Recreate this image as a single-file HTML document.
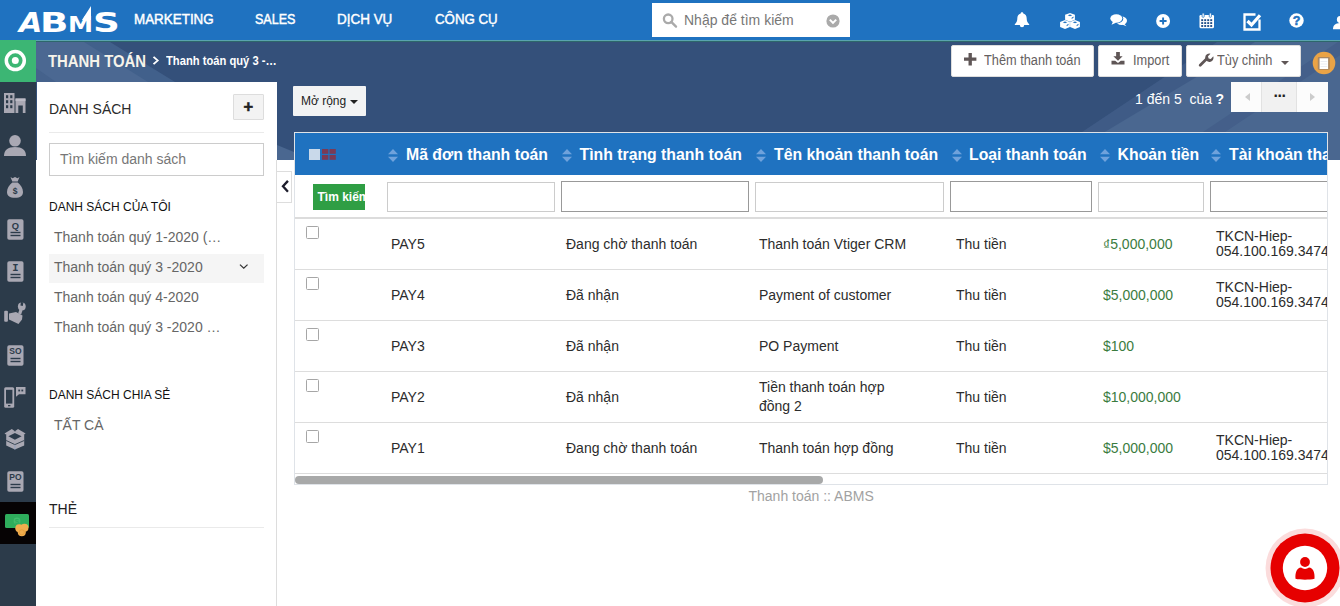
<!DOCTYPE html>
<html lang="vi">
<head>
<meta charset="utf-8">
<title>Thanh toán :: ABMS</title>
<style>
*{box-sizing:border-box;margin:0;padding:0}
html,body{width:1340px;height:606px;overflow:hidden;background:#fff}
body{font-family:"Liberation Sans",sans-serif;font-size:14px;color:#333;position:relative}
.a{position:absolute}
.t{position:absolute;white-space:nowrap;line-height:1}
svg{position:absolute;overflow:visible}
#topbar{position:absolute;left:0;top:0;width:1340px;height:40px;background:#1f72c0}
#tline1{position:absolute;left:0;top:40px;width:1340px;height:1px;background:#5aa4ae}
#tline2{position:absolute;left:0;top:41px;width:1340px;height:1px;background:#2d676b}
#subbar{position:absolute;left:0;top:42px;width:1340px;height:118px;background:#34507a;overflow:hidden}
#side{position:absolute;left:0;top:82px;width:36px;height:524px;background:#2c3b4a}
#greenbox{position:absolute;left:0;top:40px;width:36px;height:42px;background:#3cb674}
#panel{position:absolute;left:37px;top:82px;width:240px;height:524px;background:#fff}
#pborder{position:absolute;left:276px;top:160px;width:1px;height:446px;background:#ddd}
.menu{transform-origin:0 0;position:absolute;top:12px;color:#fff;font-size:14.5px;-webkit-text-stroke:0.45px #fff;white-space:nowrap;line-height:1}
.btn{position:absolute;background:#fff;border:1px solid #ddd;border-radius:2px;top:45px;height:32px}
.btn .t{color:#646060;font-size:14px;top:7px;transform-origin:0 0;transform:scaleX(.912)}
.li{position:absolute;left:54px;color:#666;font-size:14px;white-space:nowrap;line-height:1}
.h12{position:absolute;left:49px;color:#111;font-size:12px;white-space:nowrap;line-height:1}
.logo{position:absolute;left:0;top:0;width:125px;height:40px;font-family:"DejaVu Sans","Liberation Sans",sans-serif;font-weight:bold;font-size:27.400px;color:#fff;line-height:1}
.logo span{position:absolute;top:9px;transform-origin:0 0;display:block}
/* table */
#tbl{position:absolute;left:294px;top:132px;width:1034px;height:353px;background:#fff;border:1px solid #dfe3e8;overflow:hidden}
#thead{position:absolute;left:0;top:0;width:1032px;height:42px;background:#1f72c0}
.th{position:absolute;top:14px;color:#fff;font-weight:bold;font-size:15.800px;white-space:nowrap;line-height:1;font-family:"Liberation Sans",sans-serif}
.inp{position:absolute;top:49px;height:30px;background:#fff;border:1px solid #ccc}
.inp.d{top:48px;height:31px;border-color:#999}
.rl{position:absolute;left:0;width:1032px;height:1px;background:#ddd}
.c{position:absolute;white-space:nowrap;line-height:1;color:#2c2c2c;font-size:14px}
.g{color:#3b7c3f}
.cb{position:absolute;left:11px;width:13px;height:13px;border:1px solid #a6a6a6;border-radius:1.500px;background:#fff}
</style>
</head>
<body>
<div id="subbar">
<svg width="1340" height="118" viewBox="0 42 1340 118" style="left:0;top:0">
<polygon points="36,42 110,42 175,82 36,82" fill="#41608b"/>
<polygon points="36,42 84,42 148,82 36,82" fill="#4b6892"/>
<polygon points="36,68 56,82 36,82" fill="#45628c"/>
<polygon points="1217,42 1340,42 1340,160 1040,160" fill="#3f5b86"/>
<polygon points="1255,42 1340,42 1340,160 1058,160" fill="#4a6790"/>
<polygon points="1338,42 1360,42 1183,160 1161,160" fill="#445f8a"/>
<polygon points="277,145 294,152 294,160 277,160" fill="#4a6790"/>
</svg>
</div>
<div id="topbar"></div>
<div id="tline1"></div><div id="tline2"></div>
<div id="greenbox"></div>
<div id="side"></div>
<div id="panel"></div>
<div id="pborder"></div>
<!--TOPBAR-->
<div class="logo"><span style="left:18.500px;font-style:oblique;transform:scaleX(1.1)">A</span><span style="left:40px;transform:scaleX(1.36)">B</span><span style="left:68px;font-size:21px;top:15.300px;transform:scaleX(1.2)">M</span><span style="left:93px;transform:scaleX(1.36)">S</span></div>
<svg width="10" height="16" viewBox="0 0 10 16" style="left:82px;top:6px"><polygon points="0,14 9,0 9,14" fill="#fff"/></svg>
<div class="menu" style="left:133.5px;transform:scaleX(.925)">MARKETING</div>
<div class="menu" style="left:254.5px;transform:scaleX(.865)">SALES</div>
<div class="menu" style="left:336.5px;transform:scaleX(.928)">DỊCH VỤ</div>
<div class="menu" style="left:435px;transform:scaleX(.915)">CÔNG CỤ</div>
<div class="a" style="left:652px;top:3px;width:198px;height:34px;background:#fff"></div>
<svg width="16" height="16" viewBox="0 0 16 16" style="left:662px;top:12px"><circle cx="6.2" cy="6.8" r="4.3" fill="none" stroke="#aaa" stroke-width="2.3"/><path d="M9.5 10.2 L14 14.6" stroke="#aaa" stroke-width="2.4" stroke-linecap="round"/></svg>
<div class="t" style="left:684px;top:13px;font-size:14px;color:#777">Nhập để tìm kiếm</div>
<svg width="14" height="14" viewBox="0 0 14 14" style="left:825.5px;top:13.5px"><circle cx="7" cy="7" r="6.6" fill="#aaa"/><path d="M3.8 5.6 L7 8.9 L10.2 5.6" fill="none" stroke="#fff" stroke-width="2"/></svg>
<!--ICONS-->
<svg width="16" height="17" viewBox="0 0 16 17" style="left:1014px;top:11.5px"><path d="M8 0.3c.8 0 1.3.5 1.3 1.2 2.3.6 3.4 2.5 3.4 5 0 2.700.8 4.300 2.500 5.700v.9H.8v-.9C2.500 10.800 3.300 9.200 3.300 6.500c0-2.500 1.100-4.400 3.400-5C6.700.8 7.200.3 8 .3z" fill="#fff"/><path d="M5.800 13h4.400a2.200 2.200 0 0 1-4.400 0z" fill="#fff"/></svg>
<svg width="20" height="16.500" viewBox="0 0 20 17" preserveAspectRatio="none" style="left:1059.500px;top:12.600px"><g fill="#fff"><path d="M10 0l4.900 1.900v5L10 8.900 5.100 6.900v-5z"/><path d="M5 7.200l4.900 2v5.200L5 16.500.1 14.400V9.200z"/><path d="M15 7.200l4.900 2v5.200L15 16.500l-4.900-2.100V9.200z"/></g><g fill="#1f72c0"><path d="M10 1.500l2.300.9-2.300 1-2.300-1z"/><path d="M5 8.700l2.300.9-2.300 1-2.300-1z"/><path d="M15 8.700l2.300.9-2.300 1-2.300-1z"/><path d="M11.600 6.300l1.900-1.400v-1.300l-1.900 1.400z"/><path d="M6.600 13.700l1.900-1.400v-1.300l-1.900 1.400z"/><path d="M16.600 13.700l1.900-1.400v-1.300l-1.900 1.400z"/></g></svg>
<svg width="18" height="13" viewBox="0 0 18 13" style="left:1109.500px;top:13.800px"><ellipse cx="11.500" cy="6.800" rx="5.500" ry="4.200" fill="#fff"/><path d="M14 9.500l2.500 2.800-4.500-1.800z" fill="#fff"/><ellipse cx="6.500" cy="4.600" rx="6.800" ry="4.900" fill="#1f72c0"/><ellipse cx="6.300" cy="4.500" rx="6" ry="4.200" fill="#fff"/><path d="M3 7.500L1.500 10.800 6.500 8.600z" fill="#fff"/></svg>
<svg width="16" height="16" viewBox="0 0 16 16" style="left:1155px;top:12.800px"><circle cx="8.100" cy="8" r="6.950" fill="#fff"/><path d="M8.100 4.500v7M4.600 8h7" stroke="#1f72c0" stroke-width="1.900"/></svg>
<svg width="15.500" height="16" viewBox="0 0 16 17" preserveAspectRatio="none" style="left:1198.800px;top:12.600px"><rect x=".5" y="2.200" width="15" height="14" rx="1.200" fill="#fff"/><rect x="3.200" y="0" width="2.200" height="4.600" rx="1" fill="#fff" stroke="#1f72c0" stroke-width=".8"/><rect x="10.600" y="0" width="2.200" height="4.600" rx="1" fill="#fff" stroke="#1f72c0" stroke-width=".8"/><g fill="#1f4f8a"><rect x="2.300" y="6.600" width="2" height="2"/><rect x="5.400" y="6.600" width="2" height="2"/><rect x="8.500" y="6.600" width="2" height="2"/><rect x="11.600" y="6.600" width="2" height="2"/><rect x="2.300" y="9.700" width="2" height="2"/><rect x="5.400" y="9.700" width="2" height="2"/><rect x="8.500" y="9.700" width="2" height="2"/><rect x="11.600" y="9.700" width="2" height="2"/><rect x="2.300" y="12.800" width="2" height="2"/><rect x="5.400" y="12.800" width="2" height="2"/><rect x="8.500" y="12.800" width="2" height="2"/><rect x="11.600" y="12.800" width="2" height="2"/></g></svg>
<svg width="20" height="18" viewBox="0 0 20 18" style="left:1242.500px;top:12.500px"><path d="M12.500 1.500H1.500v15h15V6.500" fill="none" stroke="#fff" stroke-width="2.300"/><path d="M4.500 8l4 4L17 2.300" fill="none" stroke="#fff" stroke-width="3.200"/></svg>
<svg width="15" height="15" viewBox="0 0 15 15" style="left:1289.300px;top:13px"><circle cx="7.500" cy="7.500" r="7.200" fill="#fff"/><text x="7.500" y="11.900" text-anchor="middle" font-family="Liberation Sans, sans-serif" font-weight="bold" font-size="12.500" fill="#1f72c0" stroke="#1f72c0" stroke-width=".5">?</text></svg>
<svg width="16" height="14" viewBox="0 0 16 14" style="left:1333px;top:15.500px"><circle cx="7.500" cy="3.600" r="3.600" fill="#fff"/><path d="M0 13.200c0-4 2.500-6.200 7.500-6.200s7.500 2.200 7.500 6.200z" fill="#fff"/></svg>
<!--SUBBAR-->
<svg width="24" height="24" viewBox="0 0 24 24" style="left:3px;top:49px"><circle cx="12.300" cy="11.600" r="9" fill="none" stroke="#fff" stroke-width="3.500"/><circle cx="12.300" cy="11.600" r="3.500" fill="#fff"/></svg>
<div class="t" style="left:47.5px;top:54px;font-size:16px;font-weight:bold;color:#f6f3ea;transform-origin:0 0;transform:scaleX(.93)">THANH TOÁN</div>
<svg width="8" height="9" viewBox="0 0 8 10" preserveAspectRatio="none" style="left:152px;top:56px"><path d="M1.500 1l4.200 4-4.200 4" fill="none" stroke="#fff" stroke-width="1.900"/></svg>
<div class="t" style="left:166px;top:54.500px;font-size:12.500px;font-weight:bold;color:#fff;transform-origin:0 0;transform:scaleX(.895)">Thanh toán quý 3 -…</div>
<div class="btn" style="left:951px;width:143px"><svg width="12.400" height="12.400" viewBox="0 0 13 13" style="left:12.300px;top:6.700px"><path d="M6.500 0v13M0 6.500h13" stroke="#5f5656" stroke-width="3.500"/></svg><div class="t" style="left:32px">Thêm thanh toán</div></div>
<div class="btn" style="left:1098px;width:84px"><svg width="14" height="13" viewBox="0 0 15 14" style="left:12px;top:5.500px"><path d="M5.500 0h4v4.500h3L7.500 9.500 2.500 4.500h3z" fill="#5f5656"/><path d="M.5 9.500h4l3 2.300 3-2.300h4v4H.5z" fill="#5f5656"/></svg><div class="t" style="left:33.500px">Import</div></div>
<div class="btn" style="left:1186px;width:115px"><svg width="15" height="15" viewBox="0 0 15 15" style="left:12px;top:7px"><path d="M1.200 12.300l6.300-6.300" stroke="#5f5656" stroke-width="2.800" stroke-linecap="round"/><path d="M14.300 3.300a4.200 4.200 0 1 1-2.800-2.600L9 3.200l.6 2.200 2.200.6z" fill="#5f5656"/></svg><div class="t" style="left:30px">Tùy chỉnh</div><svg width="8" height="4" viewBox="0 0 8 4" style="left:94px;top:15px"><path d="M0 0h8L4 4z" fill="#5f5656"/></svg></div>
<svg width="26" height="26" viewBox="0 0 26 26" style="left:1311.200px;top:50px"><circle cx="13" cy="13" r="11.300" fill="#eaa346"/><rect x="6.800" y="7" width="12" height="12.700" rx="1" fill="#a98763"/><rect x="8.600" y="8.300" width="8.500" height="10.700" fill="#fff"/><path d="M9.500 11.500h6.700M9.500 14h6.700M9.500 16.500h6.700" stroke="#e4e9f0" stroke-width=".8"/></svg>
<div class="a" style="left:293px;top:86px;width:73px;height:30px;background:#f2f3f4;border-radius:1px"></div>
<div class="t" style="left:301px;top:95px;font-size:12px;color:#222">Mở rộng</div>
<svg width="8" height="4" viewBox="0 0 8 4" style="left:350px;top:100px"><path d="M0 0h8L4 4z" fill="#222"/></svg>
<div class="t" style="left:1135px;top:92px;font-size:14px;color:#fff;white-space:pre">1 đến 5  của</div>
<div class="t" style="left:1215.500px;top:92px;font-size:14px;font-weight:bold;color:#fff">?</div>
<div class="a" style="left:1231px;top:82px;width:97px;height:30px;background:#fcfcfc"></div>
<div class="a" style="left:1261px;top:82px;width:36px;height:30px;background:#f1f1f1;border-left:1px solid #e2e2e2;border-right:1px solid #e2e2e2"></div>
<svg width="5" height="8" viewBox="0 0 5 8" style="left:1244.500px;top:92.500px"><path d="M5 0v8L0 4z" fill="#ccc"/></svg>
<svg width="5" height="8" viewBox="0 0 5 8" style="left:1310px;top:92.500px"><path d="M0 0v8l5-4z" fill="#ccc"/></svg>
<div class="t" style="left:1273.500px;top:84px;font-size:16px;font-weight:bold;color:#222;letter-spacing:-.5px">...</div>
<!--SIDE-->
<svg width="22" height="20" viewBox="0 0 22 20" style="left:4px;top:93.300px"><path d="M0 0h10.500v20H0z" fill="#a9a8b3"/><path d="M11.500 5.500h10v14.500h-10z" fill="#a9a8b3"/><g fill="#2c3b4a"><rect x="2" y="2.200" width="2.200" height="3"/><rect x="6.200" y="2.200" width="2.200" height="3"/><rect x="2" y="7.200" width="2.200" height="3"/><rect x="6.200" y="7.200" width="2.200" height="3"/><rect x="2" y="12.200" width="2.200" height="3"/><rect x="6.200" y="12.200" width="2.200" height="3"/><rect x="14.300" y="12.500" width="4.500" height="7.500"/></g><rect x="11.500" y="5.500" width="10" height="2.600" fill="#bdbcc6"/></svg>
<svg width="22" height="21" viewBox="0 0 22 21" style="left:4.300px;top:134.500px"><circle cx="11" cy="5.800" r="5.800" fill="#a9a8b3"/><path d="M0 21c0-6 4-9 11-9s11 3 11 9z" fill="#a9a8b3"/></svg>
<svg width="16" height="21" viewBox="0 0 16 21" style="left:7px;top:176.500px"><path d="M3.500 0l2 1.300L8 0l2.500 1.300 2-1.300-1.800 4.600H5.300z" fill="#a9a8b3"/><path d="M5.300 5.600h5.400c3 2.400 5.300 5.800 5.300 9.400 0 3.800-2.600 5.800-8 5.800s-8-2-8-5.800c0-3.600 2.300-7 5.300-9.400z" fill="#a9a8b3"/><text x="8" y="17.200" text-anchor="middle" font-family="Liberation Sans, sans-serif" font-weight="bold" font-size="8.500" fill="#2c3b4a">$</text></svg>
<svg width="17" height="21" viewBox="0 0 17 21" style="left:6.500px;top:218.8px"><rect x=".3" y=".2" width="16.200" height="20.500" rx="1.800" fill="#a9a8b3"/><text x="8.400" y="10" text-anchor="middle" font-family="Liberation Sans, sans-serif" font-weight="bold" font-size="9.300" fill="#2c3b4a">Q</text><rect x="3.500" y="12.800" width="10" height="1.400" fill="#2c3b4a"/><rect x="3.500" y="15.800" width="10" height="1.400" fill="#2c3b4a"/></svg>
<svg width="17" height="21" viewBox="0 0 17 21" style="left:6.500px;top:261px"><rect x=".3" y=".2" width="16.200" height="20.500" rx="1.800" fill="#a9a8b3"/><text x="8.400" y="10.300" text-anchor="middle" font-family="Liberation Mono, monospace" font-weight="bold" font-size="10.500" fill="#2c3b4a">I</text><rect x="3.500" y="12.800" width="10" height="1.400" fill="#2c3b4a"/><rect x="3.500" y="15.800" width="10" height="1.400" fill="#2c3b4a"/></svg>
<svg width="24" height="24" viewBox="0 0 24 24" style="left:4px;top:302px"><rect x=".2" y="8.700" width="3.700" height="11.100" rx="1" fill="#a9a8b3"/><path d="M5 11.500l7-1.500 6.500 3.500-.5 4-3.500 4.500L5 17.500z" fill="#a9a8b3"/><path d="M15.600 12l2-6" stroke="#a9a8b3" stroke-width="3.200"/><circle cx="17.800" cy="4.400" r="3.900" fill="#a9a8b3"/><path d="M17 0l2.400.4-.6 3.600-2.400-.4z" fill="#2c3b4a"/></svg>
<svg width="17" height="21" viewBox="0 0 17 21" style="left:6.500px;top:344.8px"><rect x=".3" y=".2" width="16.200" height="20.500" rx="1.800" fill="#a9a8b3"/><text x="8.400" y="9.3" text-anchor="middle" font-family="Liberation Sans, sans-serif" font-weight="bold" font-size="8.5" fill="#2c3b4a">SO</text><rect x="3.500" y="12.800" width="10" height="1.400" fill="#2c3b4a"/><rect x="3.500" y="15.800" width="10" height="1.400" fill="#2c3b4a"/></svg>
<svg width="22" height="21" viewBox="0 0 22 21" style="left:4.300px;top:386.800px"><rect x=".2" y=".2" width="10" height="20.600" rx="1.500" fill="#a9a8b3"/><rect x="2" y="2.800" width="6.400" height="13.800" fill="#2c3b4a"/><rect x="4" y="18" width="2.400" height="1.300" fill="#2c3b4a"/><path d="M12 0h9.500v7.200H15l-3 2.600z" fill="#a9a8b3"/><rect x="14.300" y="2.600" width="1.800" height="1.800" fill="#2c3b4a"/><rect x="17.400" y="2.600" width="1.800" height="1.800" fill="#2c3b4a"/></svg>
<svg width="24" height="24" viewBox="0 0 24 24" style="left:4px;top:428px"><path d="M.5 5.500L7.800 1l3.100 2.300-7 4.500z" fill="#a9a8b3"/><path d="M10.900 3.300L14 1l7.600 4.500-3.100 2.300z" fill="#a9a8b3"/><path d="M2.200 7l8.700-3.700L20.200 7v10.600l-9.300 3.900-8.700-3.900z" fill="#a9a8b3"/><path d="M4.400 8.300L10.900 5l6.700 3.300-6.700 3.400z" fill="#2c3b4a"/><path d="M2.200 12.500l8.700 4.100 9.300-4.100" fill="none" stroke="#2c3b4a" stroke-width=".9"/><path d="M10.900 16.600v4.900" stroke="#8fa0c0" stroke-width=".8"/></svg>
<svg width="17" height="21" viewBox="0 0 17 21" style="left:6.500px;top:470.8px"><rect x=".3" y=".2" width="16.200" height="20.500" rx="1.800" fill="#a9a8b3"/><text x="8.400" y="9.3" text-anchor="middle" font-family="Liberation Sans, sans-serif" font-weight="bold" font-size="8.5" fill="#2c3b4a">PO</text><rect x="3.500" y="12.800" width="10" height="1.400" fill="#2c3b4a"/><rect x="3.500" y="15.800" width="10" height="1.400" fill="#2c3b4a"/></svg>
<div class="a" style="left:0;top:502px;width:36px;height:41.5px;background:#060304"></div>
<svg width="25" height="23" viewBox="0 0 25 23" style="left:5px;top:513.800px"><rect x="0" y="0" width="24" height="14" rx="1.500" fill="#2fad5c"/><circle cx="12" cy="7" r="3.400" fill="#43bd6e"/><text x="12" y="10" text-anchor="middle" font-family="Liberation Sans, sans-serif" font-weight="bold" font-size="8" fill="#2fad5c">$</text><circle cx="14.300" cy="14.300" r="4" fill="#f0ad4e"/><circle cx="19.500" cy="13.800" r="4" fill="#f0ad4e"/><circle cx="16.800" cy="18.300" r="4" fill="#f0ad4e"/><circle cx="16.800" cy="18.300" r="2.600" fill="none" stroke="#e39a35" stroke-width=".7"/></svg>
<!--PANEL-->
<div class="t" style="left:49px;top:102px;font-size:14px;color:#2b2b2b">DANH SÁCH</div>
<div class="a" style="left:233px;top:94px;width:31px;height:26px;background:#f3f3f3;border:1px solid #ddd;border-radius:1px"></div>
<div class="t" style="left:243.600px;top:98.200px;font-size:16.500px;font-weight:bold;color:#222;-webkit-text-stroke:.5px #222">+</div>
<div class="a" style="left:49px;top:132px;width:215px;height:1px;background:#eaeaea"></div>
<div class="a" style="left:49px;top:143px;width:215px;height:33px;background:#fff;border:1px solid #ccc"></div>
<div class="t" style="left:60px;top:152px;font-size:14px;color:#777">Tìm kiếm danh sách</div>
<div class="h12" style="top:201px">DANH SÁCH CỦA TÔI</div>
<div class="li" style="top:230px">Thanh toán quý 1-2020 (…</div>
<div class="a" style="left:49px;top:254px;width:215px;height:29px;background:#f5f5f5"></div>
<div class="li" style="top:260px">Thanh toán quý 3 -2020</div>
<svg width="9.500" height="5.300" viewBox="0 0 10 6" preserveAspectRatio="none" style="left:239px;top:263.700px"><path d="M1 .8l4 4 4-4" fill="none" stroke="#333" stroke-width="1.300"/></svg>
<div class="li" style="top:290px">Thanh toán quý 4-2020</div>
<div class="li" style="top:320px">Thanh toán quý 3 -2020 …</div>
<div class="h12" style="top:389px">DANH SÁCH CHIA SẺ</div>
<div class="li" style="top:418px">TẤT CẢ</div>
<div class="t" style="left:49px;top:502px;font-size:14px;color:#222">THẺ</div>
<div class="a" style="left:49px;top:527px;width:215px;height:1px;background:#eaeaea"></div>
<div class="a" style="left:277px;top:171px;width:15px;height:32px;background:#fff;border:1px solid #ddd;border-left:0"></div>
<svg width="8.500" height="12.600" viewBox="0 0 9 14" style="left:280.500px;top:180px"><path d="M7.500 1L2 7l5.500 6" fill="none" stroke="#1d1d2c" stroke-width="2.600"/></svg>
<!--TABLE-->
<div id="tbl">
<div id="thead"></div>
<div class="a" style="left:13.5px;top:16px;width:11.500px;height:11px;background:#c9d9ea"></div>
<svg width="14" height="11" viewBox="0 0 14 11" style="left:27px;top:16px"><g fill="#7a3a55"><rect x="0" y="0" width="6.300" height="4.800"/><rect x="7.500" y="0" width="6.300" height="4.800"/><rect x="0" y="6" width="6.300" height="4.800"/><rect x="7.500" y="6" width="6.300" height="4.800"/></g></svg>
<svg width="10" height="13" viewBox="0 0 10 13" style="left:93px;top:15.500px"><path d="M0 5.300L5 0l5 5.300zM0 7.700h10L5 13z" fill="#6fa2dc"/></svg><div class="th" style="left:111px">Mã đơn thanh toán</div>
<svg width="10" height="13" viewBox="0 0 10 13" style="left:266.5px;top:15.500px"><path d="M0 5.300L5 0l5 5.300zM0 7.700h10L5 13z" fill="#6fa2dc"/></svg><div class="th" style="left:284.5px">Tình trạng thanh toán</div>
<svg width="10" height="13" viewBox="0 0 10 13" style="left:461px;top:15.500px"><path d="M0 5.300L5 0l5 5.300zM0 7.700h10L5 13z" fill="#6fa2dc"/></svg><div class="th" style="left:479px">Tên khoản thanh toán</div>
<svg width="10" height="13" viewBox="0 0 10 13" style="left:656.5px;top:15.500px"><path d="M0 5.300L5 0l5 5.300zM0 7.700h10L5 13z" fill="#6fa2dc"/></svg><div class="th" style="left:674px">Loại thanh toán</div>
<svg width="10" height="13" viewBox="0 0 10 13" style="left:805.3px;top:15.500px"><path d="M0 5.300L5 0l5 5.300zM0 7.700h10L5 13z" fill="#6fa2dc"/></svg><div class="th" style="left:822.6px">Khoản tiền</div>
<svg width="10" height="13" viewBox="0 0 10 13" style="left:916px;top:15.500px"><path d="M0 5.300L5 0l5 5.300zM0 7.700h10L5 13z" fill="#6fa2dc"/></svg><div class="th" style="left:934px">Tài khoản thanh toán</div>

<div class="a" style="left:18px;top:51px;width:52px;height:26px;background:#2f9e44;overflow:hidden"><div class="t" style="left:4.500px;top:7px;font-size:12px;font-weight:bold;color:#fff">Tìm kiếm</div></div>
<div class="inp" style="left:92px;width:168px"></div><div class="inp d" style="left:266px;width:188px"></div><div class="inp" style="left:460px;width:189px"></div><div class="inp d" style="left:655px;width:142px"></div><div class="inp" style="left:803px;width:106px"></div><div class="inp d" style="left:915px;width:190px"></div>
<div class="rl" style="top:83.5px;height:2.5px;background:#dcdcdc"></div>
<div class="cb" style="top:93px"></div><div class="c" style="left:96px;top:103.5px">PAY5</div><div class="c" style="left:271px;top:103.5px">Đang chờ thanh toán</div><div class="c" style="left:464px;top:103.5px">Thanh toán Vtiger CRM</div><div class="c" style="left:661px;top:103.5px">Thu tiền</div><div class="c g" style="left:808px;top:103.5px"><span style="position:relative;top:1px">₫</span>5,000,000</div><div class="c" style="left:921px;top:96px">TKCN-Hiep-</div><div class="c" style="left:921px;top:111px">054.100.169.3474</div><div class="rl" style="top:136px"></div>
<div class="cb" style="top:144px"></div><div class="c" style="left:96px;top:154.5px">PAY4</div><div class="c" style="left:271px;top:154.5px">Đã nhận</div><div class="c" style="left:464px;top:154.5px">Payment of customer</div><div class="c" style="left:661px;top:154.5px">Thu tiền</div><div class="c g" style="left:808px;top:154.5px">$5,000,000</div><div class="c" style="left:921px;top:147px">TKCN-Hiep-</div><div class="c" style="left:921px;top:162px">054.100.169.3474</div><div class="rl" style="top:187px"></div>
<div class="cb" style="top:195px"></div><div class="c" style="left:96px;top:205.5px">PAY3</div><div class="c" style="left:271px;top:205.5px">Đã nhận</div><div class="c" style="left:464px;top:205.5px">PO Payment</div><div class="c" style="left:661px;top:205.5px">Thu tiền</div><div class="c g" style="left:808px;top:205.5px">$100</div><div class="rl" style="top:238px"></div>
<div class="cb" style="top:246px"></div><div class="c" style="left:96px;top:256.5px">PAY2</div><div class="c" style="left:271px;top:256.5px">Đã nhận</div><div class="c" style="left:464px;top:247px">Tiền thanh toán hợp</div><div class="c" style="left:464px;top:266px">đồng 2</div><div class="c" style="left:661px;top:256.5px">Thu tiền</div><div class="c g" style="left:808px;top:256.5px">$10,000,000</div><div class="rl" style="top:289px"></div>
<div class="cb" style="top:297px"></div><div class="c" style="left:96px;top:307.5px">PAY1</div><div class="c" style="left:271px;top:307.5px">Đang chờ thanh toán</div><div class="c" style="left:464px;top:307.5px">Thanh toán hợp đồng</div><div class="c" style="left:661px;top:307.5px">Thu tiền</div><div class="c g" style="left:808px;top:307.5px">$5,000,000</div><div class="c" style="left:921px;top:300px">TKCN-Hiep-</div><div class="c" style="left:921px;top:315px">054.100.169.3474</div><div class="rl" style="top:340px"></div>

<div class="a" style="left:0;top:343px;width:528px;height:8px;border-radius:4px;background:#a8a9a9"></div>
</div>
<div class="t" style="left:748.500px;top:489px;font-size:14px;color:#a2a2a2">Thanh toán :: ABMS</div>
<!--FLOAT-->
<svg width="82" height="82" viewBox="0 0 82 82" style="left:1263.700px;top:527px"><circle cx="41" cy="41" r="39.500" fill="#fbdcdc"/><circle cx="41" cy="41" r="34.500" fill="#e60000"/><circle cx="41" cy="41" r="22.200" fill="#fff"/><circle cx="41" cy="35" r="4.900" fill="#e60000"/><path d="M31.500 51.800c-.5-6.500 1.500-10.800 5.500-11.200 2.500 1.800 5.500 1.800 8 0 4 .4 6 4.700 5.500 11.200-5 1.200-14 1.200-19 0z" fill="#e60000"/></svg>
</body>
</html>
